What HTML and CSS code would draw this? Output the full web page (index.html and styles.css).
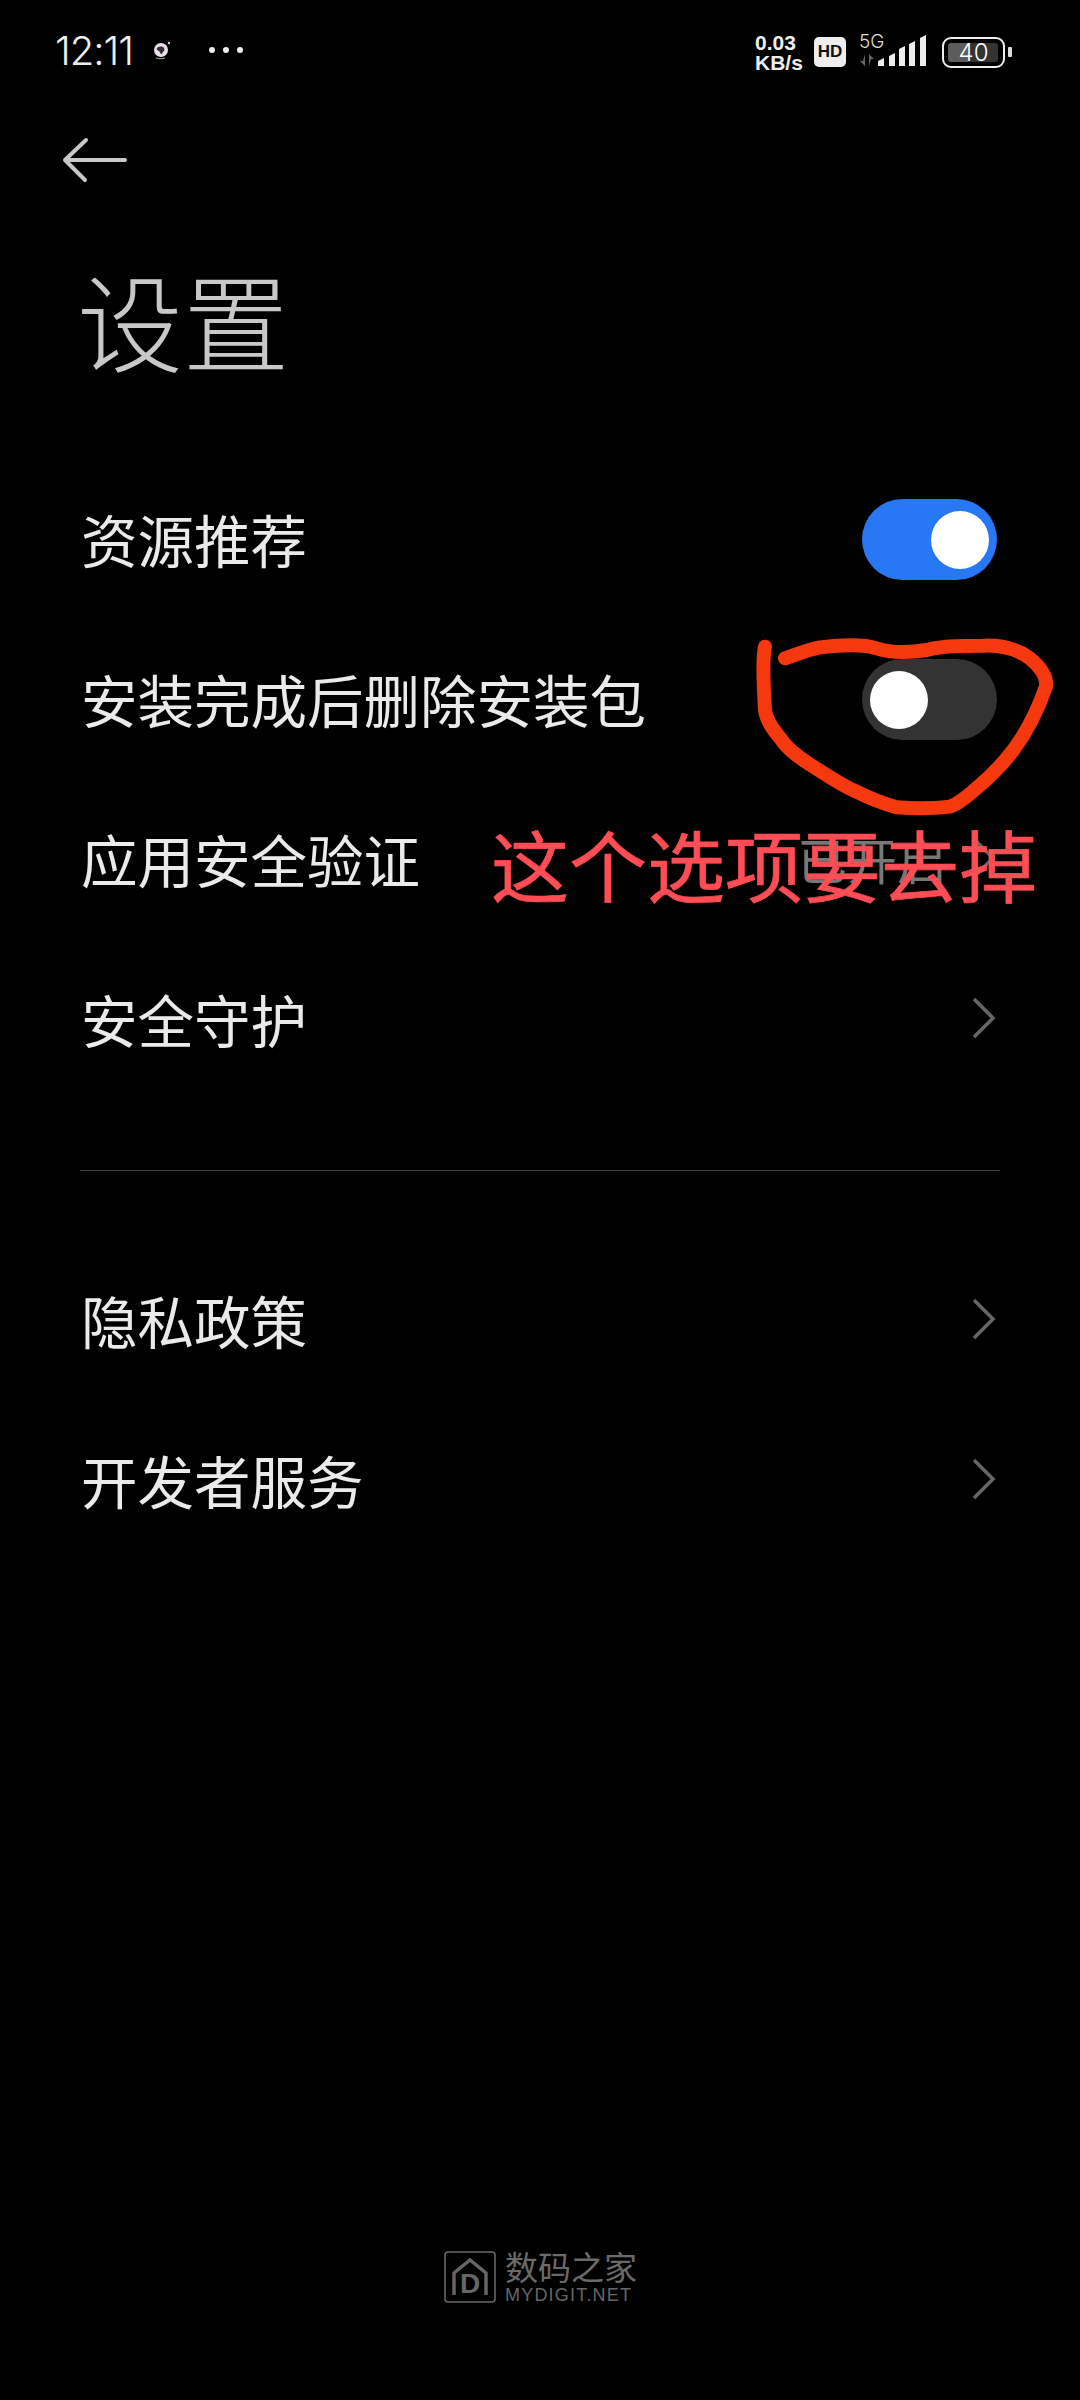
FILE: index.html
```html
<!DOCTYPE html>
<html lang="zh-CN">
<head>
    <meta charset="UTF-8">
    <meta name="viewport" content="width=device-width, initial-scale=1.0">
    <title>设置</title>
    <link rel="stylesheet" href="styles.css">
</head>
<body>
    <div class="page">
        <!-- Status bar -->
        <div class="status-bar">
            <div class="status-left">
                <span class="time">12:11</span>
                <svg class="app-icon" width="24" height="24" viewBox="0 0 24 24">
                    <circle cx="11" cy="12" r="7" fill="#e8dfe8"/>
                    <path d="M7 10c2-2 6-2 7 0s0 3-1 4-1 3-2 2-1-2-2-3-3-1-2-3z" fill="#3a2a3a"/>
                    <path d="M6 20c3 1 7 1 9 0" stroke="#b9a9b9" stroke-width="1" fill="none"/>
                    <circle cx="19" cy="5" r="1.2" fill="#e8c8d8"/>
                </svg>
                <div class="dots"><i></i><i></i><i></i></div>
            </div>
            <div class="status-right">
                <div class="speed">0.03<br>KB/s</div>
                <div class="hd">HD</div>
                <div class="net">
                    <span class="net-label">5G</span>
                    <svg class="net-arrows" width="16" height="14" viewBox="0 0 16 14">
                        <path d="M6 1v12L1 8h3zM10 13V1l5 5h-3z" fill="#666"/>
                    </svg>
                </div>
                <svg class="signal" width="50" height="32" viewBox="0 0 50 32">
                    <path d="M1 27l6-3v8H1zM12 22l6-3v13h-6zM22 15l6-3v20h-6zM32 10l6-3v25h-6zM43 4l6-3v31h-6z" fill="#eee"/>
                </svg>
                <div class="battery">
                    <div class="battery-body">
                        <div class="battery-level"></div>
                        <span class="battery-text">40</span>
                    </div>
                    <div class="battery-nub"></div>
                </div>
            </div>
        </div>

        <!-- Header -->
        <div class="back-row">
            <svg width="66" height="46" viewBox="0 0 66 46">
                <path d="M3 23h60M24 3L3 23l20 20" stroke="#c8c8c8" stroke-width="4" fill="none" stroke-linecap="round" stroke-linejoin="round"/>
            </svg>
        </div>
        <h1 class="title">设置</h1>

        <!-- Settings list -->
        <div class="list">
            <div class="row">
                <span class="row-label">资源推荐</span>
                <div class="toggle on"><div class="knob"></div></div>
            </div>
            <div class="row">
                <span class="row-label">安装完成后删除安装包</span>
                <div class="toggle"><div class="knob"></div></div>
            </div>
            <div class="row">
                <span class="row-label">应用安全验证</span>
                <div class="row-end">
                    <span class="row-value">已开启</span>
                    <svg class="chevron" width="24" height="42" viewBox="0 0 24 42"><path d="M1 2l19 19L1 40" stroke="#666" stroke-width="3.5" fill="none"/></svg>
                </div>
            </div>
            <div class="row">
                <span class="row-label">安全守护</span>
                <svg class="chevron" width="24" height="42" viewBox="0 0 24 42"><path d="M1 2l19 19L1 40" stroke="#666" stroke-width="3.5" fill="none"/></svg>
            </div>
        </div>

        <div class="divider"></div>

        <div class="list">
            <div class="row">
                <span class="row-label">隐私政策</span>
                <svg class="chevron" width="24" height="42" viewBox="0 0 24 42"><path d="M1 2l19 19L1 40" stroke="#666" stroke-width="3.5" fill="none"/></svg>
            </div>
            <div class="row">
                <span class="row-label">开发者服务</span>
                <svg class="chevron" width="24" height="42" viewBox="0 0 24 42"><path d="M1 2l19 19L1 40" stroke="#666" stroke-width="3.5" fill="none"/></svg>
            </div>
        </div>

        <!-- Watermark -->
        <div class="watermark">
            <svg width="52" height="52" viewBox="0 0 52 52">
                <rect x="1" y="1" width="50" height="50" rx="3" stroke="#666" stroke-width="1.6" fill="none"/>
                <path d="M10 44V22L26 9l16 13v22" stroke="#666" stroke-width="3.4" fill="none"/>
                <text x="26" y="42" text-anchor="middle" class="logo-d">D</text>
            </svg>
            <div class="watermark-text">
                <span class="wm-cn">数码之家</span>
                <span class="wm-en">MYDIGIT.NET</span>
            </div>
        </div>

        <!-- Hand drawn note over the screenshot -->
        <svg class="scribble" width="360" height="360" viewBox="0 0 1080 1080">
            <path d="M135 530C128 560 130 640 135 720C140 760 170 790 185 810C205 840 240 865 280 890C320 915 370 950 410 965C450 985 490 1000 530 1012C580 1016 640 1016 690 1010C720 1000 745 975 775 950C810 920 850 880 880 840C910 800 950 730 978 650C982 620 960 590 930 565C890 535 840 525 790 527C730 527 670 527 620 540C570 548 510 548 470 535C430 522 360 525 300 532C260 540 225 555 195 565" stroke="#f5380e" stroke-width="42" fill="none" stroke-linecap="round" stroke-linejoin="round"/>
        </svg>
        <div class="note">这个选项要去掉</div>
    </div>
</body>
</html>
```

FILE: styles.css
```css
body {
    margin: 0;
    background-color: #000;
    font-family: "Noto Sans CJK SC", "Noto Sans", sans-serif;
    color: #e8e8e8;
}

.page {
    position: relative;
    width: 1080px;
    height: 2400px;
    display: flex;
    flex-direction: column;
    overflow: hidden;
}

/* Status bar */
.status-bar {
    height: 100px;
    display: flex;
    justify-content: space-between;
    align-items: center;
    padding: 0 68px 0 55px;
    box-sizing: border-box;
}

.status-left {
    display: flex;
    align-items: center;
}

.time {
    font-family: "Inter", sans-serif;
    font-weight: 300;
    font-size: 40px;
    letter-spacing: -1px;
    color: #eee;
    width: 95px;
}

.app-icon {
    margin-right: 35px;
}

.dots {
    display: flex;
    gap: 8px;
}

.dots i {
    width: 6px;
    height: 6px;
    border-radius: 50%;
    background-color: #eee;
}

.status-right {
    display: flex;
    align-items: center;
    height: 36px;
}

.speed {
    width: 59px;
    margin-top: 5px;
    font-family: "Liberation Sans", sans-serif;
    font-weight: bold;
    font-size: 21px;
    line-height: 20px;
    color: #eee;
}

.hd {
    width: 32px;
    height: 30px;
    margin-top: 3px;
    margin-right: 13px;
    border-radius: 5px;
    background-color: #eee;
    color: #111;
    font-family: "Liberation Sans", sans-serif;
    font-weight: bold;
    font-size: 17px;
    line-height: 30px;
    text-align: center;
}

.net {
    width: 18px;
    height: 36px;
    display: flex;
    flex-direction: column;
    white-space: nowrap;
}

.net-label {
    font-family: "Inter", sans-serif;
    font-weight: 300;
    font-size: 19px;
    line-height: 20px;
    color: #ddd;
}

.net-arrows {
    margin-top: 1px;
}

.signal {
    margin-right: 15px;
}

.battery {
    display: flex;
    align-items: center;
    gap: 3px;
    margin-top: 4px;
}

.battery-body {
    position: relative;
    width: 63px;
    height: 31px;
    box-sizing: border-box;
    padding: 4px;
    border: 2.5px solid #eee;
    border-radius: 9px;
    display: flex;
    justify-content: center;
    align-items: center;
}

.battery-level {
    position: absolute;
    left: 4px;
    top: 4px;
    bottom: 4px;
    width: 50px;
    border-radius: 3px;
    background: linear-gradient(90deg, #5c5c5c 0 40%, #333 40%);
}

.battery-text {
    position: relative;
    font-family: "Inter", sans-serif;
    font-weight: 300;
    font-size: 24px;
    color: #fff;
}

.battery-nub {
    width: 4px;
    height: 10px;
    border-radius: 1px;
    background-color: #ddd;
}

/* Header */
.back-row {
    height: 120px;
    display: flex;
    align-items: center;
    padding-left: 62px;
}

.title {
    margin: 33px 0 74px 77px;
    font-size: 106px;
    font-weight: 300;
    line-height: 130px;
    color: #c8c8c8;
}

/* List rows */
.row {
    height: 161px;
    display: flex;
    justify-content: space-between;
    align-items: center;
    padding: 0 83px 0 81px;
    margin-bottom: -1px;
}

.row-label {
    font-size: 56.5px;
    line-height: 70px;
    color: #eaeaea;
}

.row-end {
    display: flex;
    align-items: center;
    gap: 26px;
}

.row-value {
    font-size: 50px;
    color: #777;
}

.chevron {
    display: block;
}

.toggle {
    width: 135px;
    height: 81px;
    margin-top: 4px;
    box-sizing: border-box;
    padding: 12px 8px;
    border-radius: 41px;
    background-color: #333;
    display: flex;
    justify-content: flex-start;
}

.toggle.on {
    background-color: #2878f5;
    justify-content: flex-end;
}

.knob {
    width: 58px;
    height: 58px;
    border-radius: 50%;
    background-color: #fff;
}

.divider {
    height: 1px;
    margin: 73px 80px 67px;
    background-color: #444;
}

/* Watermark */
.watermark {
    margin-top: auto;
    margin-bottom: 94px;
    margin-left: 444px;
    display: flex;
    align-items: center;
    gap: 9px;
}

.watermark-text {
    display: flex;
    flex-direction: column;
    width: 132px;
}

.wm-cn {
    font-size: 33px;
    line-height: 36px;
    color: #6a6a6a;
}

.wm-en {
    font-family: "Liberation Sans", sans-serif;
    font-size: 18px;
    line-height: 22px;
    letter-spacing: 1.2px;
    white-space: nowrap;
    color: #666;
}

.logo-d {
    font-family: "Liberation Sans", sans-serif;
    font-weight: bold;
    font-size: 28px;
    fill: #666;
}

/* Annotation */
.scribble {
    position: absolute;
    left: 720px;
    top: 470px;
}

.note {
    position: absolute;
    left: 491px;
    top: 814px;
    font-size: 78px;
    line-height: 98px;
    white-space: nowrap;
    color: #ff4d55;
    -webkit-text-stroke: 0.7px #ff4d55;
}
```
